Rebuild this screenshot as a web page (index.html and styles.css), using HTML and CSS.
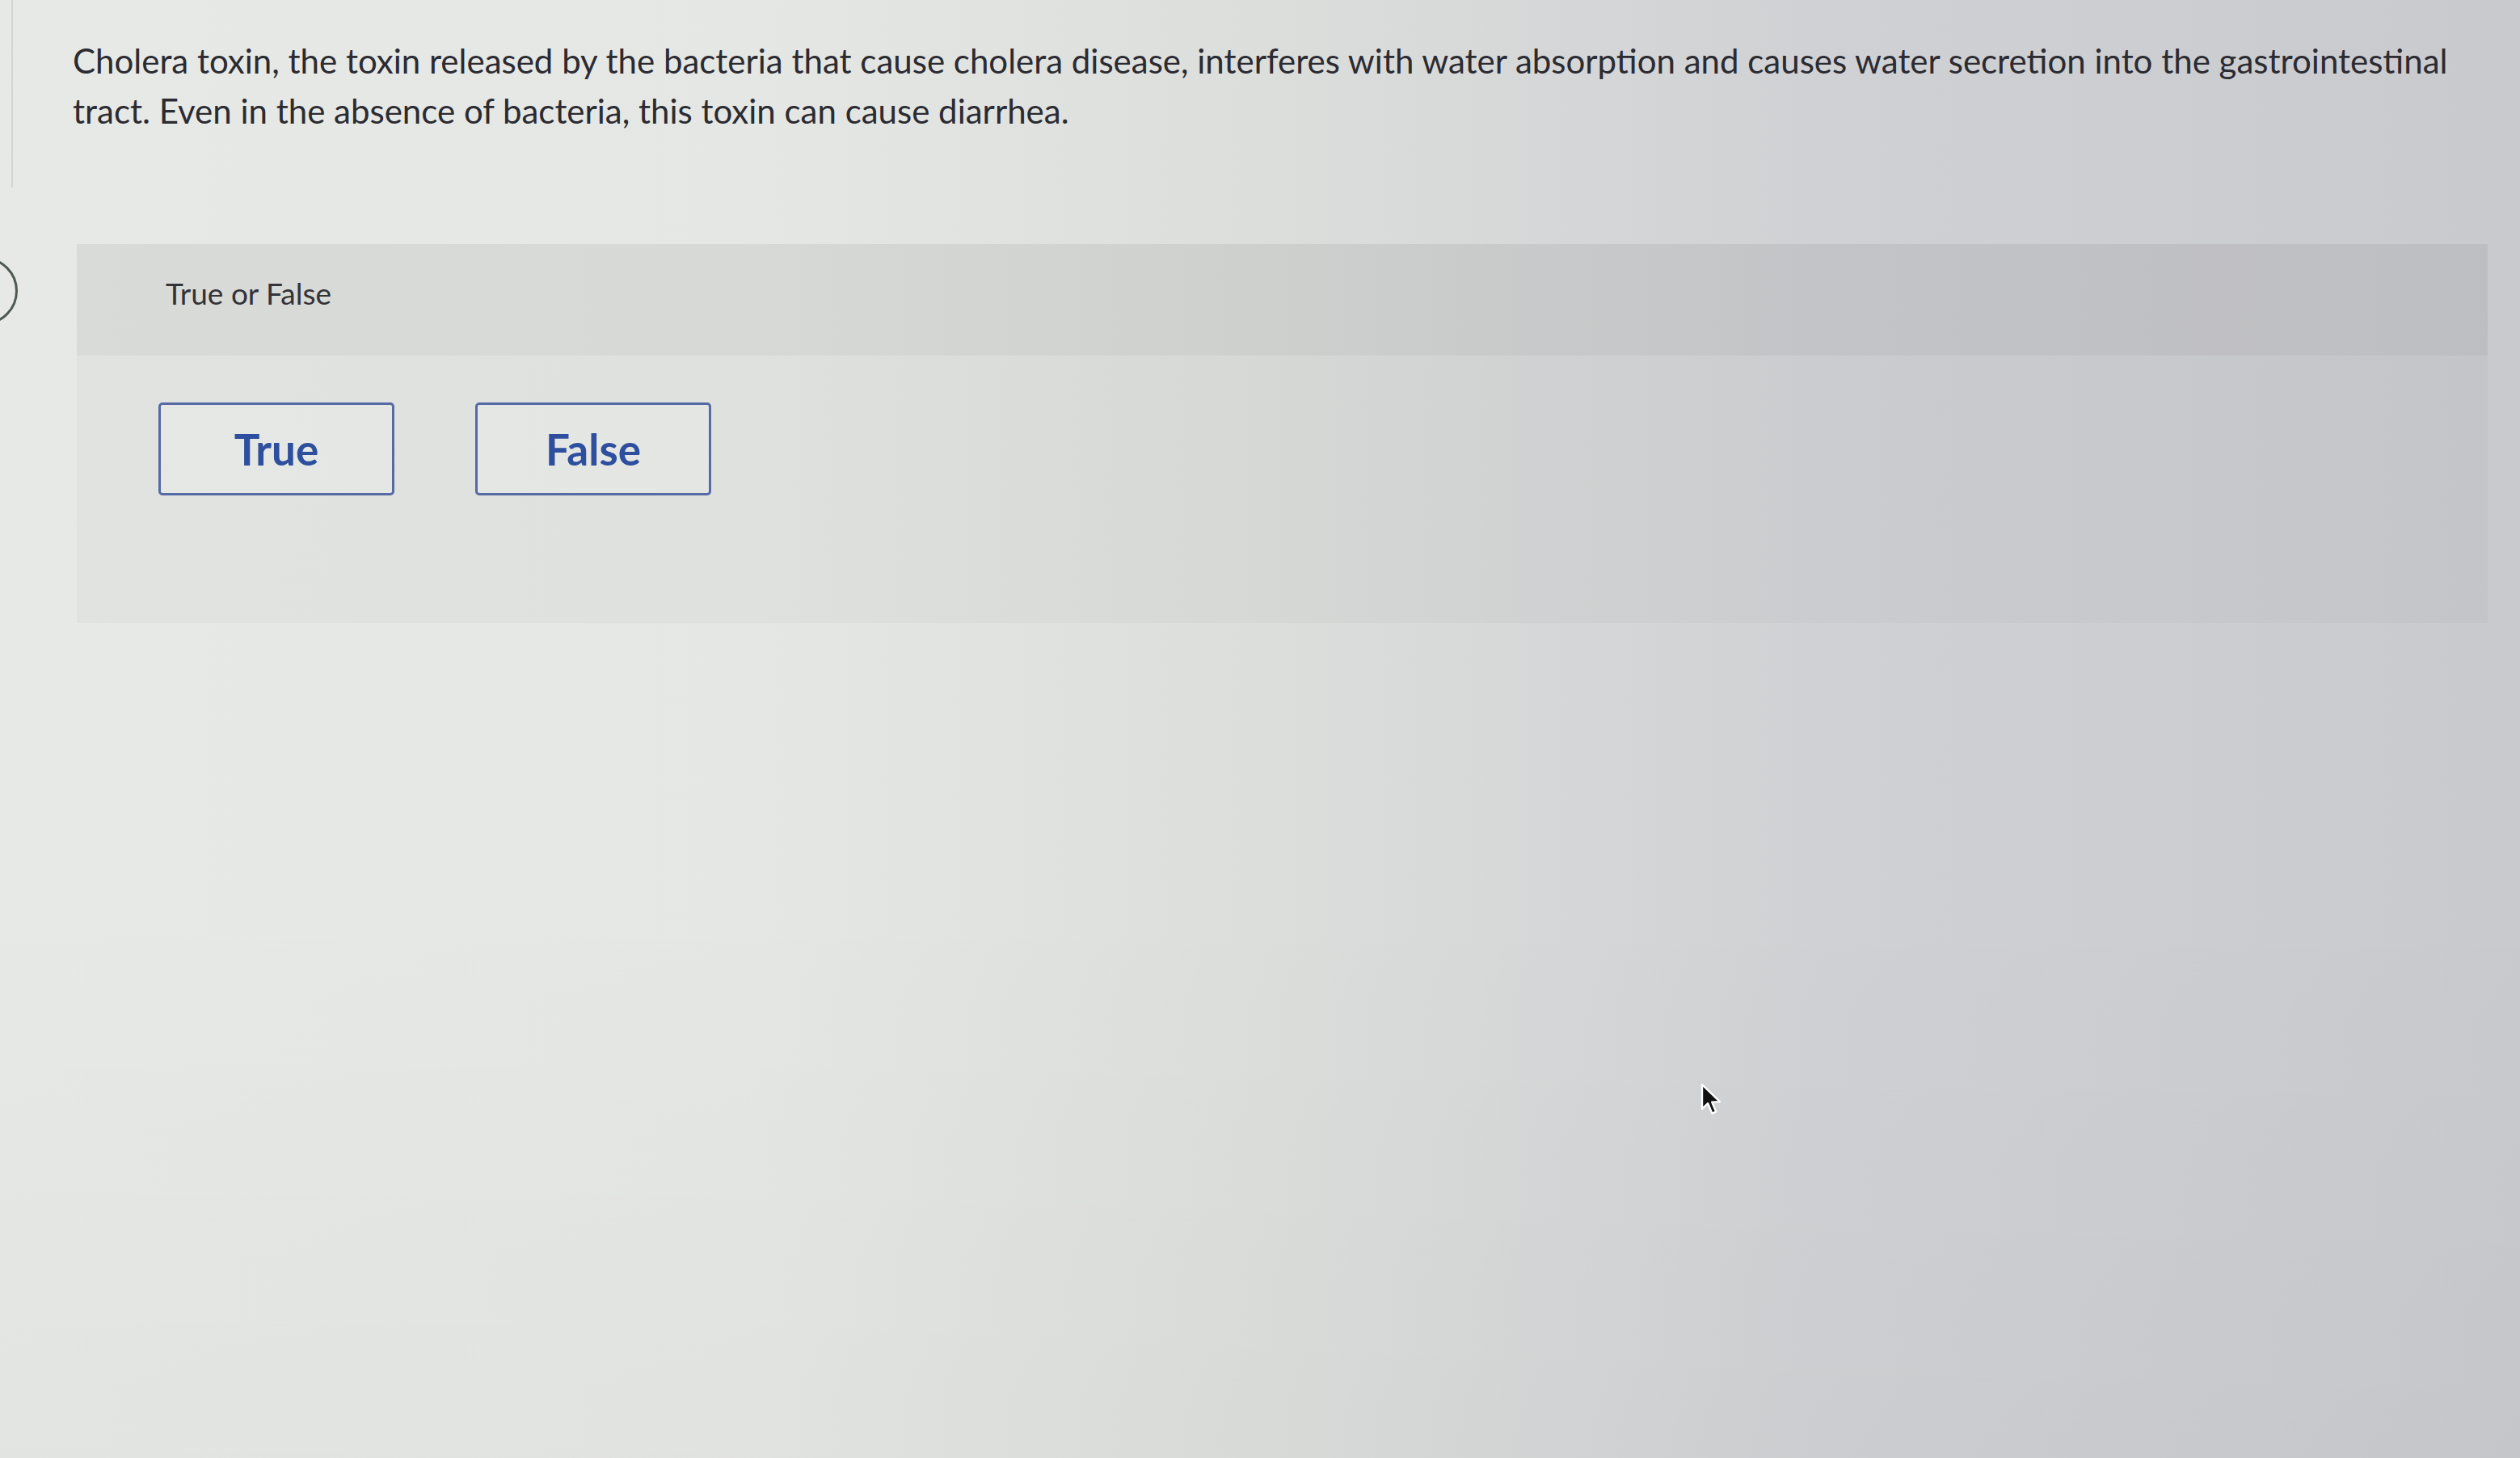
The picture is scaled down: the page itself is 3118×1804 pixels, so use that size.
FILE: index.html
```html
<!DOCTYPE html>
<html lang="en">
<head>
<meta charset="utf-8">
<title>True or False</title>
<link rel="stylesheet" href="styles.css">
</head>
<body>
<div class="edge-line"></div>
<div class="edge-circle"></div>
<main class="page">
  <p class="prompt">Cholera toxin, the toxin released by the bacteria that cause cholera disease, interferes with water absorption and causes water secretion into the gastrointestinal tract. Even in the absence of bacteria, this toxin can cause diarrhea.</p>
  <section class="panel">
    <div class="panel-head">True or False</div>
    <div class="panel-body">
      <button class="choice">True</button>
      <button class="choice">False</button>
    </div>
  </section>
</main>
<svg class="cursor" width="30" height="44" viewBox="0 0 15 22">
  <path d="M1 1 L1 16 L4.6 12.6 L7.2 18.8 L9.6 17.8 L7.1 11.8 L12 11.6 Z" fill="#111" stroke="#fff" stroke-width="1.2" stroke-linejoin="round"/>
</svg>
</body>
</html>
```
FILE: styles.css
```css
html, body {
  margin: 0;
  padding: 0;
}
body {
  width: 3118px;
  height: 1804px;
  overflow: hidden;
  position: relative;
  font-family: "Lato", "Open Sans", sans-serif;
  background:
    linear-gradient(180deg, rgba(255,255,255,0) 0%, rgba(255,255,255,0) 60%, rgba(0,0,0,0.02) 100%),
    linear-gradient(90deg, #e7e9e6 0%, #e5e7e4 30%, #dcdedc 50%, #d0d1d4 72%, #c9cace 100%);
}
.page {
  padding: 44px 40px 0 90px;
}
.prompt {
  margin: 0;
  max-width: 3000px;
  font-size: 42px;
  line-height: 62px;
  color: #2b2b31;
}
.panel {
  margin: 134px 0 0 5px;
  background: rgba(0,0,0,0.025);
}
.panel-head {
  height: 138px;
  box-sizing: border-box;
  display: flex;
  align-items: center;
  padding: 0 0 18px 110px;
  font-size: 37px;
  color: #333338;
  background: rgba(0,0,0,0.035);
}
.panel-body {
  display: flex;
  gap: 100px;
  padding: 58px 0 158px 101px;
}
.choice {
  width: 292px;
  height: 115px;
  border: 3px solid #566aa3;
  border-radius: 5px;
  background: rgba(255,255,255,0.18);
  font-family: "Lato", "Open Sans", sans-serif;
  font-weight: 700;
  font-size: 53px;
  color: #2d4f9e;
  padding: 0;
}
.edge-line {
  position: absolute;
  left: 14px;
  top: 0;
  width: 2px;
  height: 232px;
  background: rgba(0,0,0,0.08);
}
.edge-circle {
  position: absolute;
  left: -62px;
  top: 318px;
  width: 78px;
  height: 78px;
  border: 3px solid #4c5a50;
  border-radius: 50%;
}
.cursor {
  position: absolute;
  left: 2104px;
  top: 1340px;
}
```
